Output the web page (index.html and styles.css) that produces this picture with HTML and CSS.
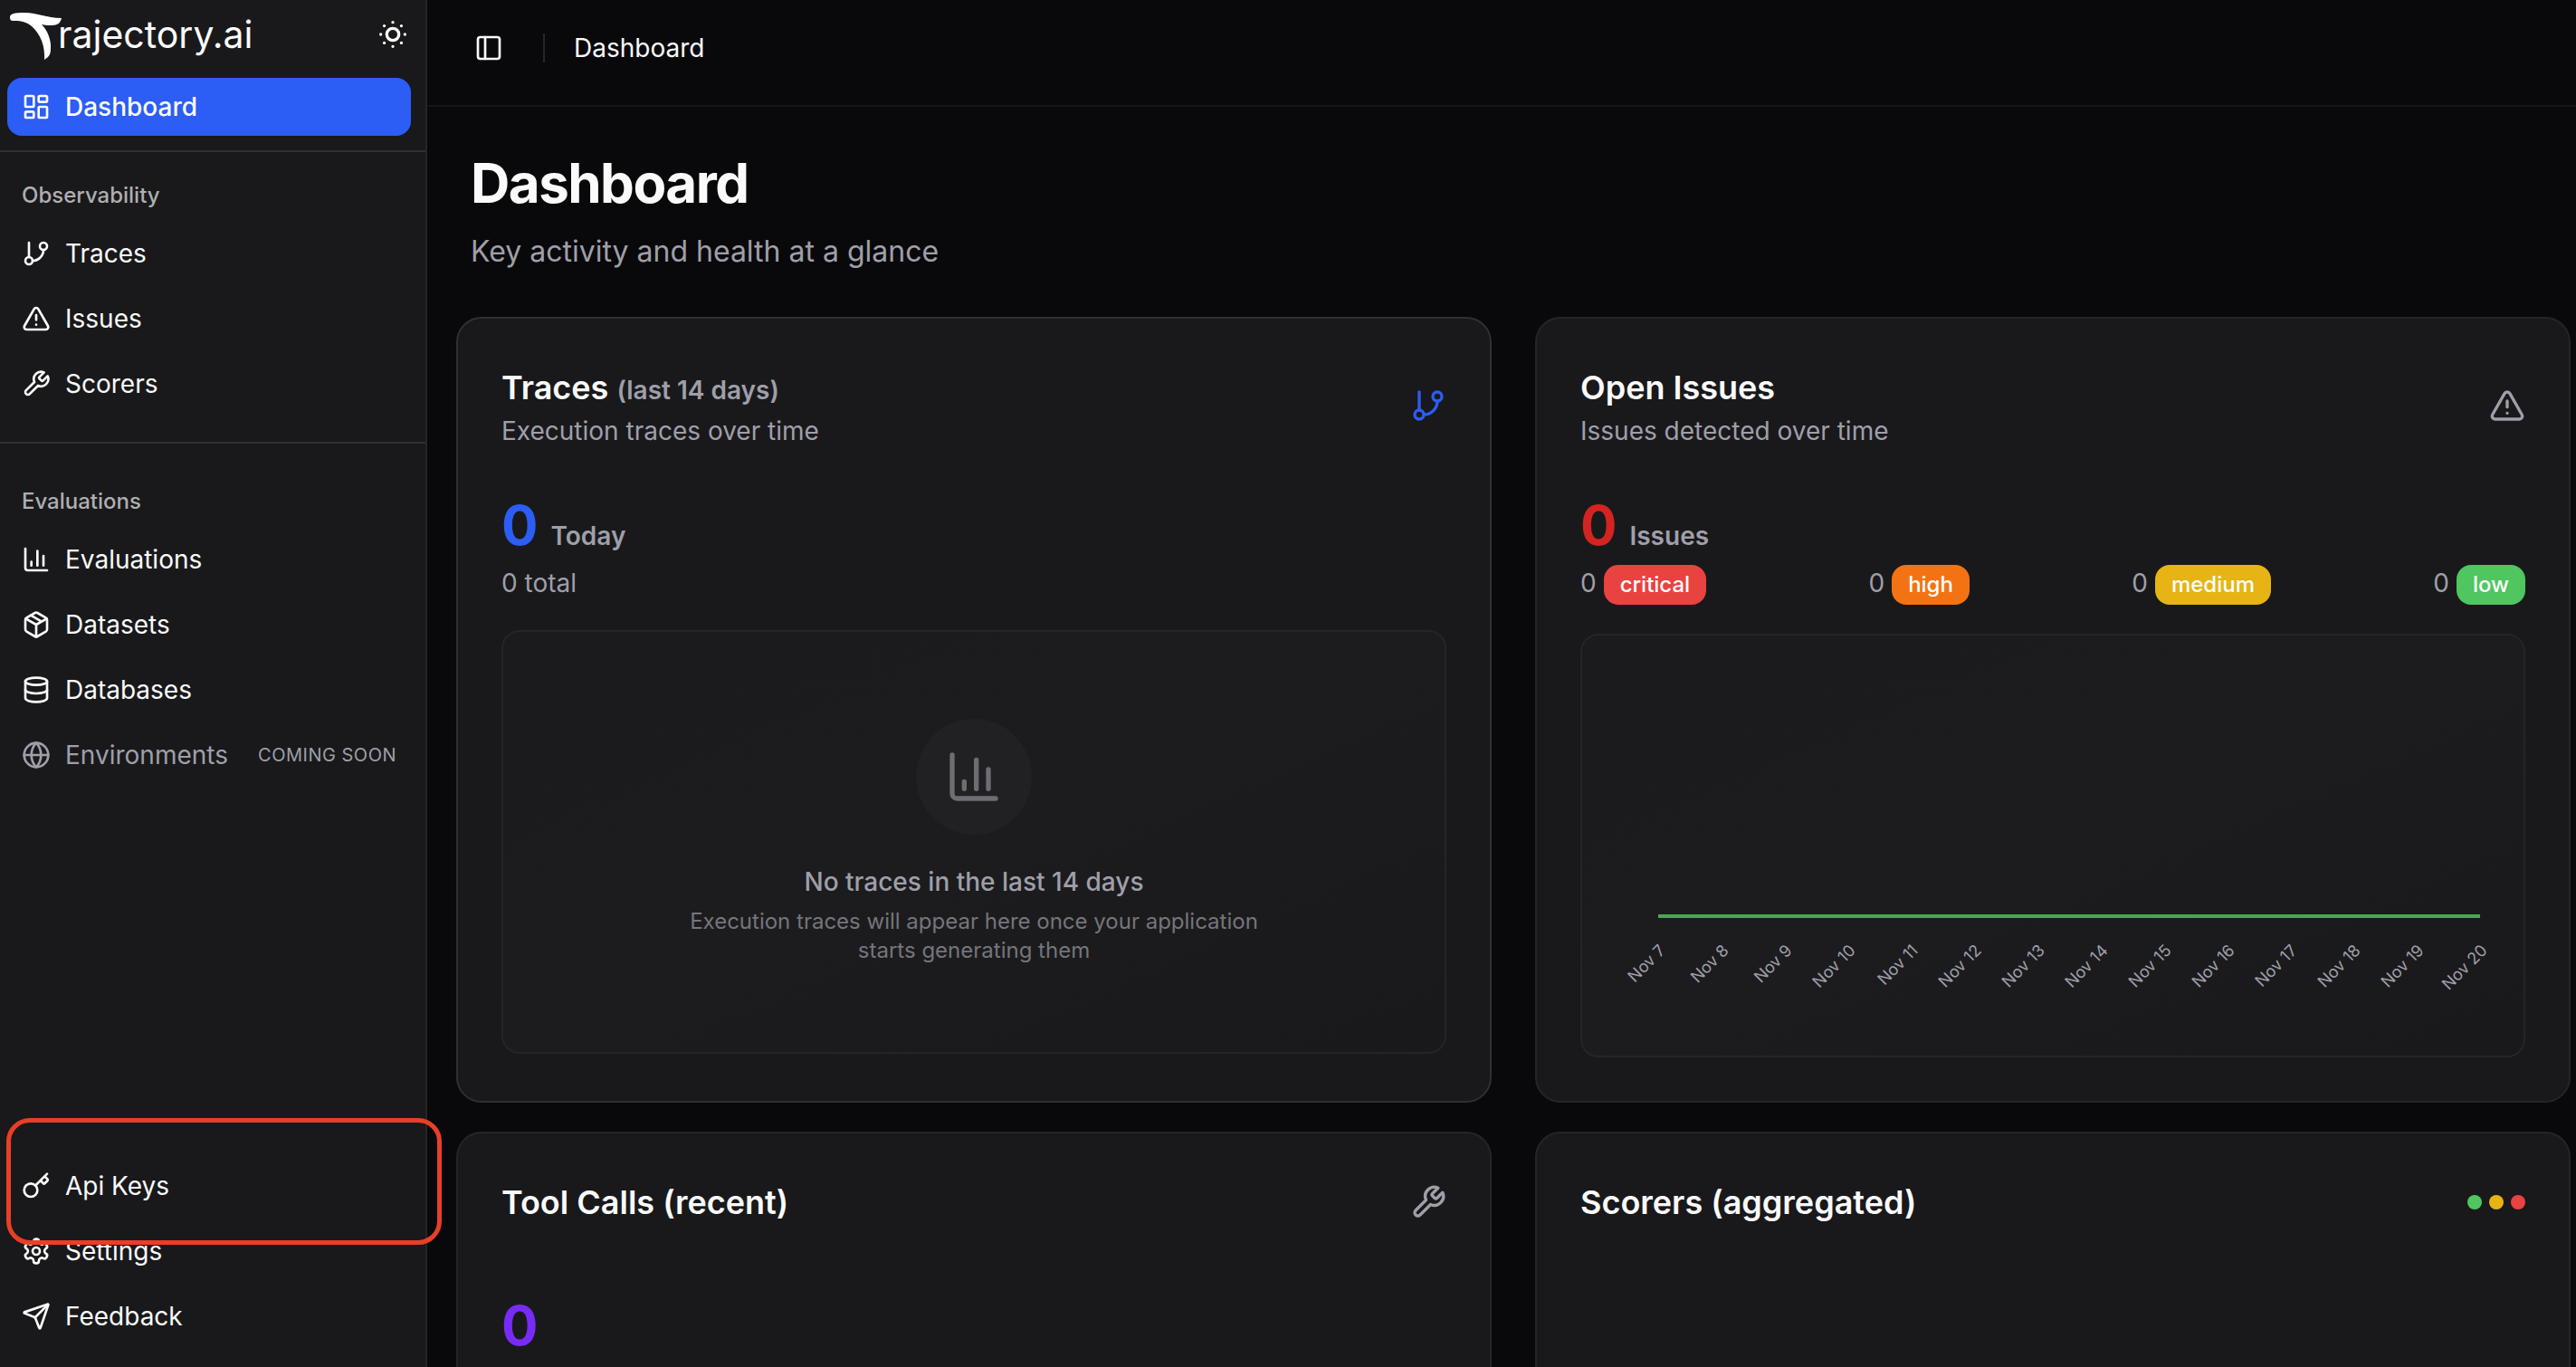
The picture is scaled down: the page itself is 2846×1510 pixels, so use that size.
FILE: index.html
```html
<!DOCTYPE html>
<html lang="en">

<head>
  <meta charset="UTF-8">
  <meta name="viewport" content="width=device-width, initial-scale=1.0">
  <title>Dashboard - Trajectory.ai</title>
  <link rel="stylesheet" href="styles.css">
</head>

<body>
  <!-- shared icon shapes -->
  <svg class="sprite" aria-hidden="true">
    <symbol id="i-sun" viewBox="0 0 24 24">
      <circle cx="12" cy="12" r="4" />
      <path d="M12 4h.01M20 12h.01M12 20h.01M4 12h.01M17.657 6.343h.01M17.657 17.657h.01M6.343 17.657h.01M6.343 6.343h.01" />
    </symbol>
    <symbol id="i-dashboard" viewBox="0 0 24 24">
      <rect width="7" height="9" x="3" y="3" rx="1" />
      <rect width="7" height="5" x="14" y="3" rx="1" />
      <rect width="7" height="9" x="14" y="12" rx="1" />
      <rect width="7" height="5" x="3" y="16" rx="1" />
    </symbol>
    <symbol id="i-branch" viewBox="0 0 24 24">
      <path d="M6 3v12" />
      <circle cx="18" cy="6" r="3" />
      <circle cx="6" cy="18" r="3" />
      <path d="M18 9a9 9 0 0 1-9 9" />
    </symbol>
    <symbol id="i-alert" viewBox="0 0 24 24">
      <path d="m21.73 18-8-14a2 2 0 0 0-3.48 0l-8 14A2 2 0 0 0 4 21h16a2 2 0 0 0 1.73-3" />
      <path d="M12 9v4M12 17h.01" />
    </symbol>
    <symbol id="i-wrench" viewBox="0 0 24 24">
      <path d="M14.7 6.3a1 1 0 0 0 0 1.4l1.6 1.6a1 1 0 0 0 1.4 0l3.77-3.77a6 6 0 0 1-7.94 7.94l-6.91 6.91a2.12 2.12 0 0 1-3-3l6.91-6.91a6 6 0 0 1 7.94-7.94l-3.76 3.76z" />
    </symbol>
    <symbol id="i-chart" viewBox="0 0 24 24">
      <path d="M3 3v16a2 2 0 0 0 2 2h16M18 17V9M13 17V5M8 17v-3" />
    </symbol>
    <symbol id="i-package" viewBox="0 0 24 24">
      <path d="M11 21.73a2 2 0 0 0 2 0l7-4A2 2 0 0 0 21 16V8a2 2 0 0 0-1-1.73l-7-4a2 2 0 0 0-2 0l-7 4A2 2 0 0 0 3 8v8a2 2 0 0 0 1 1.73z" />
      <path d="M12 22V12M3.29 7 12 12l8.71-5M7.5 4.27l9 5.15" />
    </symbol>
    <symbol id="i-database" viewBox="0 0 24 24">
      <ellipse cx="12" cy="5" rx="9" ry="3" />
      <path d="M3 5v14a9 3 0 0 0 18 0V5" />
      <path d="M3 12a9 3 0 0 0 18 0" />
    </symbol>
    <symbol id="i-globe" viewBox="0 0 24 24">
      <circle cx="12" cy="12" r="10" />
      <path d="M12 2a14.5 14.5 0 0 0 0 20 14.5 14.5 0 0 0 0-20M2 12h20" />
    </symbol>
    <symbol id="i-key" viewBox="0 0 24 24">
      <path d="m15.5 7.5 2.3 2.3a1 1 0 0 0 1.4 0l2.1-2.1a1 1 0 0 0 0-1.4L19 4M21 2l-9.6 9.6" />
      <circle cx="7.5" cy="15.5" r="5.5" />
    </symbol>
    <symbol id="i-settings" viewBox="0 0 24 24">
      <path d="M12.22 2h-.44a2 2 0 0 0-2 2v.18a2 2 0 0 1-1 1.73l-.43.25a2 2 0 0 1-2 0l-.15-.08a2 2 0 0 0-2.73.73l-.22.38a2 2 0 0 0 .73 2.73l.15.1a2 2 0 0 1 1 1.72v.51a2 2 0 0 1-1 1.74l-.15.09a2 2 0 0 0-.73 2.73l.22.38a2 2 0 0 0 2.73.73l.15-.08a2 2 0 0 1 2 0l.43.25a2 2 0 0 1 1 1.73V20a2 2 0 0 0 2 2h.44a2 2 0 0 0 2-2v-.18a2 2 0 0 1 1-1.73l.43-.25a2 2 0 0 1 2 0l.15.08a2 2 0 0 0 2.73-.73l.22-.39a2 2 0 0 0-.73-2.73l-.15-.08a2 2 0 0 1-1-1.74v-.5a2 2 0 0 1 1-1.74l.15-.09a2 2 0 0 0 .73-2.73l-.22-.38a2 2 0 0 0-2.73-.73l-.15.08a2 2 0 0 1-2 0l-.43-.25a2 2 0 0 1-1-1.73V4a2 2 0 0 0-2-2z" />
      <circle cx="12" cy="12" r="3" />
    </symbol>
    <symbol id="i-send" viewBox="0 0 24 24">
      <path d="M14.536 21.686a.5.5 0 0 0 .937-.024l6.5-19a.496.496 0 0 0-.635-.635l-19 6.5a.5.5 0 0 0-.024.937l7.93 3.18a2 2 0 0 1 1.112 1.11z" />
      <path d="m21.854 2.147-10.94 10.939" />
    </symbol>
    <symbol id="i-panel" viewBox="0 0 24 24">
      <rect width="18" height="18" x="3" y="3" rx="2" />
      <path d="M9 3v18" />
    </symbol>
  </svg>

  <aside class="sidebar">
    <div class="brand">
      <a class="brand-link" href="#">
        <svg class="brand-mark" viewBox="0 0 58 52" aria-hidden="true">
          <path d="M0 5C0 1 5 0 16 0c15 0 24 6 41 6-1 5-4 8-11 8-4 0-7 0-11-1 6 6 11 17 10 27 0 6-2 9-7 12 1-15-4-28-14-37C17 9 9 9 4 9 1 9 0 8 0 5z" />
        </svg>
        <span class="brand-name">rajectory.ai</span>
      </a>
      <button class="icon-btn" type="button" aria-label="Toggle theme"><svg class="icon icon-md"><use href="#i-sun" /></svg></button>
    </div>

    <nav class="nav">
      <div class="nav-group nav-group-top">
        <a class="nav-item active" href="#"><svg class="icon"><use href="#i-dashboard" /></svg>Dashboard</a>
      </div>

      <div class="nav-group nav-group-main">
        <h2 class="nav-label">Observability</h2>
        <a class="nav-item" href="#"><svg class="icon"><use href="#i-branch" /></svg>Traces</a>
        <a class="nav-item" href="#"><svg class="icon"><use href="#i-alert" /></svg>Issues</a>
        <a class="nav-item" href="#"><svg class="icon"><use href="#i-wrench" /></svg>Scorers</a>
      </div>

      <div class="nav-group nav-group-evals">
        <h2 class="nav-label">Evaluations</h2>
        <a class="nav-item" href="#"><svg class="icon"><use href="#i-chart" /></svg>Evaluations</a>
        <a class="nav-item" href="#"><svg class="icon"><use href="#i-package" /></svg>Datasets</a>
        <a class="nav-item" href="#"><svg class="icon"><use href="#i-database" /></svg>Databases</a>
        <a class="nav-item disabled" href="#" aria-disabled="true"><svg class="icon"><use href="#i-globe" /></svg>Environments<span class="soon">Coming soon</span></a>
      </div>

      <div class="nav-group nav-group-bottom">
        <a class="nav-item highlighted" href="#"><svg class="icon"><use href="#i-key" /></svg>Api Keys</a>
        <a class="nav-item" href="#"><svg class="icon"><use href="#i-settings" /></svg>Settings</a>
        <a class="nav-item" href="#"><svg class="icon"><use href="#i-send" /></svg>Feedback</a>
      </div>
    </nav>
  </aside>

  <main class="main">
    <header class="topbar">
      <button class="icon-btn" type="button" aria-label="Toggle sidebar"><svg class="icon"><use href="#i-panel" /></svg></button>
      <span class="topbar-divider"></span>
      <span class="crumb">Dashboard</span>
    </header>

    <div class="content">
      <div class="page-head">
        <h1>Dashboard</h1>
        <p>Key activity and health at a glance</p>
      </div>

      <div class="cards">
        <section class="card card-hover">
          <div class="card-head">
            <div>
              <h2 class="card-title">Traces <small>(last 14 days)</small></h2>
              <p class="card-desc">Execution traces over time</p>
            </div>
            <svg class="icon icon-md blue"><use href="#i-branch" /></svg>
          </div>
          <div class="stat"><span class="stat-value blue">0</span><span class="stat-label">Today</span></div>
          <p class="stat-sub">0 total</p>
          <div class="panel empty">
            <div class="empty-icon"><svg class="icon icon-lg"><use href="#i-chart" /></svg></div>
            <p class="empty-title">No traces in the last 14 days</p>
            <p class="empty-text">Execution traces will appear here once your application starts generating them</p>
          </div>
        </section>

        <section class="card">
          <div class="card-head">
            <div>
              <h2 class="card-title">Open Issues</h2>
              <p class="card-desc">Issues detected over time</p>
            </div>
            <svg class="icon icon-md muted"><use href="#i-alert" /></svg>
          </div>
          <div class="stat"><span class="stat-value red">0</span><span class="stat-label">Issues</span></div>
          <div class="severities">
            <div class="severity">0 <span class="badge badge-critical">critical</span></div>
            <div class="severity">0 <span class="badge badge-high">high</span></div>
            <div class="severity">0 <span class="badge badge-medium">medium</span></div>
            <div class="severity">0 <span class="badge badge-low">low</span></div>
          </div>
          <div class="panel">
            <svg class="chart" viewBox="0 0 1040 464" role="img" aria-label="Issues per day">
              <path class="chart-line" d="M84 310H992" />
              <g class="chart-ticks">
                <text transform="translate(93 349) rotate(-45)">Nov 7</text>
                <text transform="translate(163 349) rotate(-45)">Nov 8</text>
                <text transform="translate(233 349) rotate(-45)">Nov 9</text>
                <text transform="translate(303 349) rotate(-45)">Nov 10</text>
                <text transform="translate(372 349) rotate(-45)">Nov 11</text>
                <text transform="translate(442 349) rotate(-45)">Nov 12</text>
                <text transform="translate(512 349) rotate(-45)">Nov 13</text>
                <text transform="translate(582 349) rotate(-45)">Nov 14</text>
                <text transform="translate(652 349) rotate(-45)">Nov 15</text>
                <text transform="translate(722 349) rotate(-45)">Nov 16</text>
                <text transform="translate(791 349) rotate(-45)">Nov 17</text>
                <text transform="translate(861 349) rotate(-45)">Nov 18</text>
                <text transform="translate(931 349) rotate(-45)">Nov 19</text>
                <text transform="translate(1001 349) rotate(-45)">Nov 20</text>
              </g>
            </svg>
          </div>
        </section>

        <section class="card card-tall">
          <div class="card-head">
            <h2 class="card-title">Tool Calls (recent)</h2>
            <svg class="icon icon-md muted"><use href="#i-wrench" /></svg>
          </div>
          <div class="stat"><span class="stat-value violet">0</span></div>
        </section>

        <section class="card card-tall">
          <div class="card-head">
            <h2 class="card-title">Scorers (aggregated)</h2>
            <div class="dots"><i class="dot dot-green"></i><i class="dot dot-yellow"></i><i class="dot dot-red"></i></div>
          </div>
        </section>
      </div>
    </div>
  </main>
</body>

</html>
```
FILE: styles.css
```css
:root {
  --bg: #09090b;
  --surface: #19191b;
  --border: #252528;
  --muted: #9f9fa9;
  --blue: #2c5df4;
}

* {
  margin: 0;
  padding: 0;
  box-sizing: border-box;
}

body {
  display: flex;
  height: 100vh;
  overflow: hidden;
  background: var(--bg);
  color: #fafafa;
  font-family: Inter, "Liberation Sans", sans-serif;
  font-size: 28px;
  line-height: 40px;
}

a {
  color: inherit;
  text-decoration: none;
}

button {
  border: none;
  background: none;
  color: inherit;
  cursor: pointer;
}

.sprite {
  position: absolute;
  width: 0;
  height: 0;
}

.icon {
  width: 32px;
  height: 32px;
  flex: none;
  fill: none;
  stroke: currentColor;
  stroke-width: 2;
  stroke-linecap: round;
  stroke-linejoin: round;
}

.icon-md {
  width: 40px;
  height: 40px;
}

.icon-lg {
  width: 64px;
  height: 64px;
}

.icon-btn {
  display: flex;
}

.blue {
  color: var(--blue);
}

.red {
  color: #d42422;
}

.violet {
  color: #782bf5;
}

.muted {
  color: var(--muted);
}

/* Sidebar */
.sidebar {
  position: relative;
  z-index: 1;
  display: flex;
  flex-direction: column;
  flex: none;
  width: 472px;
  background: var(--surface);
  border-right: 2px solid var(--border);
}

.brand {
  display: flex;
  align-items: flex-start;
  justify-content: space-between;
  padding: 14px 16px 16px 11px;
}

.brand .icon-btn {
  padding-top: 4px;
}

.brand-link {
  display: flex;
  align-items: flex-start;
}

.brand-mark {
  width: 58px;
  height: 52px;
  fill: #fff;
}

.brand-name {
  margin-left: -5px;
  font-size: 41px;
  line-height: 48px;
}

.nav {
  flex: 1;
  display: flex;
  flex-direction: column;
}

.nav-group {
  display: flex;
  flex-direction: column;
  gap: 8px;
  padding: 16px 16px 32px 8px;
  border-bottom: 2px solid #303032;
}

.nav-group-top {
  padding-top: 4px;
  padding-bottom: 16px;
}

.nav-group-evals {
  padding-top: 32px;
  border-bottom: none;
}

.nav-group-bottom {
  margin-top: auto;
  padding-bottom: 24px;
  border-bottom: none;
}

.nav-label {
  height: 64px;
  margin-bottom: -8px;
  padding: 0 16px;
  color: #afafb1;
  font-size: 24px;
  font-weight: 500;
  line-height: 64px;
}

.nav-item {
  position: relative;
  display: flex;
  align-items: center;
  gap: 16px;
  height: 64px;
  padding: 0 16px;
  border-radius: 16px;
}

.nav-item.active {
  background: var(--blue);
  font-weight: 500;
}

.nav-item.disabled {
  color: var(--muted);
}

.soon {
  margin-left: auto;
  font-size: 20px;
  letter-spacing: 0.025em;
  text-transform: uppercase;
}

/* outline drawn round the api keys entry, over the neighbouring items */
.highlighted::after {
  content: "";
  position: absolute;
  z-index: 1;
  top: -43px;
  right: -34px;
  bottom: -33px;
  left: -1px;
  border: 5px solid #e93f25;
  border-radius: 26px;
  pointer-events: none;
}

/* Main */
.main {
  flex: 1;
  min-width: 0;
}

.topbar {
  display: flex;
  align-items: center;
  height: 118px;
  padding: 0 52px 10px;
  border-bottom: 2px solid #151517;
}

.topbar-divider {
  width: 2px;
  height: 32px;
  margin: 0 32px 0 44px;
  background: #27272a;
}

.content {
  padding: 48px 6px 0 32px;
}

.page-head {
  padding: 0 16px 48px;
}

.page-head h1 {
  font-size: 60px;
  font-weight: 700;
  letter-spacing: -0.025em;
  line-height: 72px;
}

.page-head p {
  margin-top: 16px;
  color: var(--muted);
  font-size: 32px;
  line-height: 48px;
}

.cards {
  display: grid;
  grid-template-columns: 1fr 1fr;
  gap: 32px 48px;
}

.card {
  padding: 48px;
  background: var(--surface);
  border: 2px solid var(--border);
  border-radius: 28px;
}

.card-hover {
  border-color: #303033;
}

.card-tall {
  min-height: 600px;
}

.card-head {
  display: flex;
  align-items: center;
  justify-content: space-between;
  margin-bottom: 48px;
}

.card-tall .card-head {
  margin-bottom: 72px;
}

.card-title {
  font-size: 36px;
  font-weight: 600;
  line-height: 56px;
}

.card-title small {
  color: var(--muted);
  font-size: 28px;
  line-height: 1;
}

.card-desc,
.stat-sub {
  color: var(--muted);
}

.stat {
  display: flex;
  align-items: baseline;
  gap: 14px;
  margin-bottom: 8px;
}

.stat-value {
  font-size: 60px;
  font-weight: 700;
  line-height: 72px;
}

.stat-label {
  color: var(--muted);
  font-weight: 600;
}

.severities {
  display: flex;
  justify-content: space-between;
}

.severity {
  display: flex;
  align-items: flex-start;
  gap: 8px;
  color: var(--muted);
}

.badge {
  padding: 6px 18px;
  border-radius: 16px;
  color: #fff;
  font-size: 24px;
  font-weight: 500;
  line-height: 32px;
}

.badge-critical {
  background: #e84341;
}

.badge-high {
  background: #f37314;
}

.badge-medium {
  background: #e6b414;
}

.badge-low {
  background: #4fc660;
}

.panel {
  height: 468px;
  margin-top: 32px;
  background: linear-gradient(to bottom right, #1b1b1e, #1c1c1e, #19191b);
  border: 2px solid var(--border);
  border-radius: 20px;
}

.empty {
  display: flex;
  flex-direction: column;
  align-items: center;
  justify-content: center;
  text-align: center;
}

.empty-icon {
  display: flex;
  align-items: center;
  justify-content: center;
  width: 128px;
  height: 128px;
  margin-bottom: 32px;
  border-radius: 50%;
  background: #212123;
  color: #6d6d73;
}

.empty-title {
  margin-bottom: 8px;
  color: var(--muted);
  font-weight: 500;
}

.empty-text {
  max-width: 640px;
  color: #75757c;
  font-size: 24px;
  line-height: 32px;
}

.chart {
  display: block;
  width: 100%;
  height: 100%;
}

.chart-line {
  fill: none;
  stroke: #4fa357;
  stroke-width: 4;
}

.chart-ticks {
  fill: var(--muted);
  font-size: 18px;
  text-anchor: end;
}

.dots {
  display: flex;
  gap: 8px;
}

.dot {
  width: 16px;
  height: 16px;
  border-radius: 50%;
}

.dot-green {
  background: #4fc660;
}

.dot-yellow {
  background: #e6b414;
}

.dot-red {
  background: #e84341;
}
```
